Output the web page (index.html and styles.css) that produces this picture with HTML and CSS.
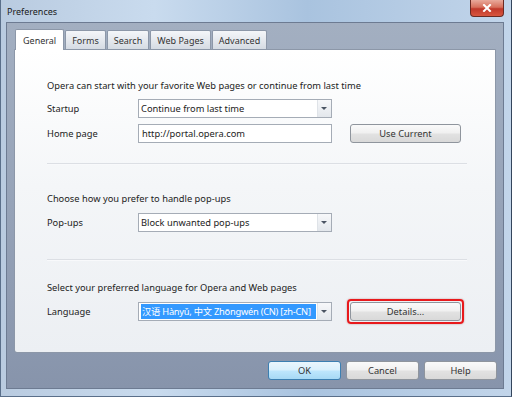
FILE: index.html
```html
<!DOCTYPE html>
<html lang="en">

<head>
    <meta charset="UTF-8">
    <meta name="viewport" content="width=device-width, initial-scale=1.0">
    <title>Preferences</title>
    <link rel="stylesheet" href="styles.css">
</head>

<body>
    <div class="window">
        <div class="titlebar">
            <span class="title">Preferences</span>
            <div class="close">
                <svg width="10" height="8" viewBox="0 0 10 8">
                    <path d="M2 1 L8 7 M8 1 L2 7" stroke="#fff" stroke-width="2" stroke-linecap="square" />
                </svg>
            </div>
        </div>

        <div class="client">
            <div class="tabs">
                <div class="tab active">General</div>
                <div class="tab">Forms</div>
                <div class="tab">Search</div>
                <div class="tab">Web Pages</div>
                <div class="tab">Advanced</div>
            </div>

            <div class="panel">
                <!-- запуск -->
                <div class="section first">
                    <p class="caption">Opera can start with your favorite Web pages or continue from last time</p>
                    <div class="row">
                        <span class="label">Startup</span>
                        <div class="select">
                            <span class="value">Continue from last time</span>
                            <span class="arrow"></span>
                        </div>
                    </div>
                    <div class="row">
                        <span class="label">Home page</span>
                        <div class="input">http://portal.opera.com</div>
                        <div class="btn">Use Current</div>
                    </div>
                </div>

                <div class="sep"></div>

                <!-- всплывающие окна -->
                <div class="section second">
                    <p class="caption">Choose how you prefer to handle pop-ups</p>
                    <div class="row">
                        <span class="label">Pop-ups</span>
                        <div class="select">
                            <span class="value">Block unwanted pop-ups</span>
                            <span class="arrow"></span>
                        </div>
                    </div>
                </div>

                <div class="sep"></div>

                <!-- язык -->
                <div class="section third">
                    <p class="caption">Select your preferred language for Opera and Web pages</p>
                    <div class="row">
                        <span class="label">Language</span>
                        <div class="select">
                            <span class="value selected">汉语 Hànyǔ, 中文 Zhōngwén (CN) [zh-CN]</span>
                            <span class="arrow"></span>
                        </div>
                        <div class="highlight">
                            <div class="btn">Details...</div>
                        </div>
                    </div>
                </div>
            </div>

            <div class="footer">
                <div class="btn default">OK</div>
                <div class="btn">Cancel</div>
                <div class="btn">Help</div>
            </div>
        </div>
    </div>
</body>

</html>
```

FILE: styles.css
```css
* {
    box-sizing: border-box;
}

body {
    margin: 0;
    font-family: "Noto Sans", "Noto Sans CJK SC", sans-serif;
    font-size: 9.3px;
    color: #222;
    background-color: #fff;
}

p {
    margin: 0;
}

.window {
    width: 512px;
    height: 397px;
    display: flex;
    flex-direction: column;
    padding: 0 7px 7px 5px;
    background: linear-gradient(90deg, #b9cbe0 0%, #c9dbee 30%, #a9c3df 60%, #c2d5ea 100%);
    border-left: 1px solid #5a6f8a;
    border-right: 1px solid #34455c;
    border-bottom: 1px solid #5a6f8a;
}

.titlebar {
    height: 22px;
    flex-shrink: 0;
    display: flex;
    align-items: center;
    justify-content: space-between;
}

.title {
    font-size: 9px;
    color: #1a1a1a;
    padding-left: 1px;
    margin-top: 1px;
}

.close {
    width: 34px;
    height: 17px;
    margin-top: -5px;
    margin-right: 0;
    display: flex;
    align-items: center;
    justify-content: center;
    border: 1px solid #6b2a22;
    border-top: 0;
    border-radius: 0 0 4px 4px;
    background: linear-gradient(#e9a99b 0%, #d7705c 45%, #c0382a 55%, #d8563f 100%);
}

.client {
    flex: 1;
    display: flex;
    flex-direction: column;
    border: 1px solid #6d7b92;
    background: linear-gradient(#a3afc1 0%, #96a3b8 50%, #8794ab 100%);
}

.tabs {
    display: flex;
    padding: 6px 0 0 8px;
    height: 26px;
    align-items: flex-end;
}

.tab {
    height: 19px;
    padding: 0 6px;
    margin-right: 1px;
    display: flex;
    align-items: center;
    font-size: 9px;
    color: #333;
    border: 1px solid #8c97a8;
    border-bottom: 0;
    border-radius: 2px 2px 0 0;
    background: linear-gradient(#f4f6f9 0%, #e2e6ec 60%, #d5dbe3 100%);
}

.tab.active {
    height: 21px;
    padding: 0 7px;
    background: #fff;
    position: relative;
    top: 1px;
    z-index: 1;
}

.panel {
    height: 304px;
    margin: 0 7px 0 7px;
    padding: 0 32px;
    border: 1px solid #8c97a8;
    border-radius: 0 0 3px 3px;
    background: linear-gradient(#ffffff 0%, #f4f6f8 45%, #eceff3 100%);
}

.section.first {
    padding-top: 28px;
}

.section.second {
    padding-top: 26px;
}

.section.third {
    padding-top: 19px;
}

.caption {
    height: 15px;
    line-height: 15px;
    margin-bottom: 6px;
}

.second .caption,
.third .caption {
    margin-bottom: 7px;
}

.row {
    display: flex;
    align-items: center;
    height: 19px;
    margin-bottom: 6px;
}

.row:last-child {
    margin-bottom: 0;
}

.label {
    width: 91px;
    flex-shrink: 0;
}

.select,
.input {
    width: 194px;
    height: 19px;
    flex-shrink: 0;
    display: flex;
    align-items: center;
    border: 1px solid #a5acb6;
    background-color: #fff;
    padding-left: 2px;
}

.select .value {
    flex: 1;
    white-space: nowrap;
    overflow: hidden;
    line-height: 15px;
}

.select .value.selected {
    color: #fff;
    background-color: #3399ff;
    margin-right: 1px;
    padding-left: 1px;
    letter-spacing: -0.25px;
}

.select .arrow {
    width: 14px;
    height: 17px;
    flex-shrink: 0;
    border-left: 1px solid #dfe3e8;
    background: linear-gradient(#f7f8fa, #e3e7ec);
    position: relative;
}

.select .arrow::after {
    content: "";
    position: absolute;
    left: 3px;
    top: 7px;
    border-left: 3px solid transparent;
    border-right: 3px solid transparent;
    border-top: 3px solid #4a5463;
}

.input {
    padding-left: 3px;
}

.btn {
    height: 19px;
    display: flex;
    align-items: center;
    justify-content: center;
    color: #333;
    border: 1px solid #8f959d;
    border-radius: 3px;
    background: linear-gradient(#fafafa 0%, #f0f0f0 48%, #e2e2e2 52%, #d9d9d9 100%);
}

.row > .btn {
    width: 111px;
    margin-left: 18px;
}

.highlight {
    margin-left: 15px;
    padding: 1px;
    border: 2px solid #e8191c;
    border-radius: 4px;
    box-shadow: 0 0 2px rgba(120, 0, 0, 0.4);
}

.highlight .btn {
    width: 111px;
    height: 19px;
}

.sep {
    height: 2px;
    margin-top: 20px;
    border-top: 1px solid #dcdfe4;
    background-color: #f8f9fb;
    width: 420px;
    margin-left: 0;
}

.sep + .section + .sep {
    margin-top: 27px;
}

.footer {
    display: flex;
    justify-content: flex-end;
    gap: 5px;
    padding: 8px 6px 0 0;
}

.footer .btn {
    width: 73px;
}

.footer .btn.default {
    border-color: #3c7fb1;
    background: linear-gradient(#eaf6fd 0%, #d9f0fc 48%, #bee6fd 52%, #a7d9f5 100%);
}
```
